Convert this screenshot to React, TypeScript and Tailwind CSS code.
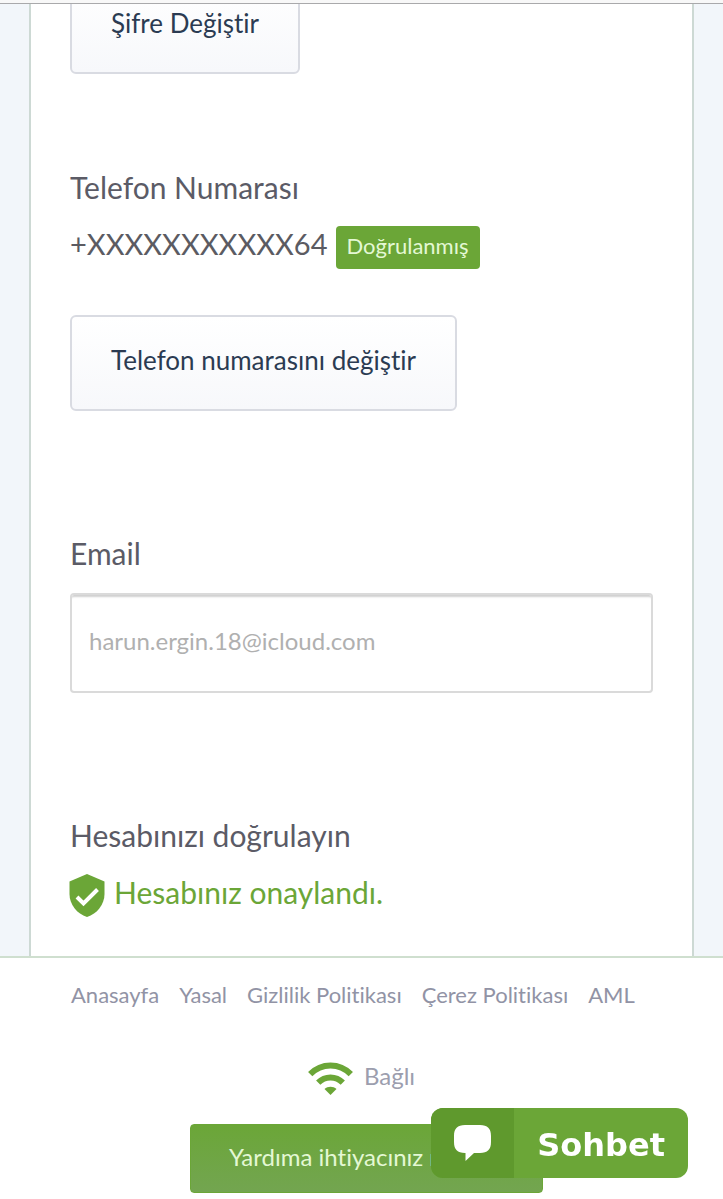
const footerLinks = ['Anasayfa', 'Yasal', 'Gizlilik Politikası', 'Çerez Politikası', 'AML'];

const outlineButton =
  'h-24 px-[39px] pb-1.5 rounded-md border-2 border-[#d9dbe2] bg-linear-to-b from-white to-[#f7f8fb] text-[26px] leading-8 text-[#2b3b52] whitespace-nowrap';

function ShieldIcon() {
  return (
    <svg viewBox="0 0 36 43" className="-ml-px h-[43px] w-9 shrink-0" aria-hidden="true">
      <path d="M18 0 35.5 7.5V20c0 10.500-7.500 20-17.500 23C8 40 .5 30.500.5 20V7.500Z" fill="#6ba637" />
      <path d="m8 23 6.500 6.500L28.500 15.500" fill="none" stroke="#fff" strokeWidth="4" />
    </svg>
  );
}

function WifiIcon() {
  return (
    <svg viewBox="0 0 45 33" className="h-[33px] w-[45px]" aria-hidden="true">
      <g fill="none" stroke="#6ba637" strokeWidth="6">
        <path d="M2.200 12.200C13.500.600 31.500.600 42.800 12.200" />
        <path d="M10.200 20.700C17 13.800 28 13.800 34.800 20.700" />
      </g>
      <path d="M16.500 27c3.300-3 8.700-3 12 0l-6 6Z" fill="#6ba637" />
    </svg>
  );
}

function ChatIcon() {
  return (
    <svg viewBox="0 0 37 36" className="h-9 w-[37px]" aria-hidden="true">
      <path
        d="M11 0h15c7.500 0 11 3.500 11 11v6c0 7.500-3.500 11-11 11h-6l-8.500 8v-8H11C3.500 28 0 24.500 0 17v-6C0 3.500 3.500 0 11 0Z"
        fill="#fff"
      />
    </svg>
  );
}

export default function App() {
  return (
    <div className="min-h-screen bg-white font-['Lato',sans-serif] text-[#5b5b66] [font-variant-ligatures:none]">
      <div className="h-1 border-b border-[#a9a9ab] bg-[#f8f8f8]" />

      <div className="border-b-2 border-[#cfdfcf] bg-[#f2f6fa] px-[29px]">
        <main className="border-x-2 border-[#cdd9d4] bg-white px-[39px] pb-[39px]">
          <div className="flex h-[70px] items-end overflow-hidden">
            <button type="button" className={outlineButton}>
              Şifre Değiştir
            </button>
          </div>

          <section className="pt-[95px]">
            <h2 className="text-[30px] leading-9">Telefon Numarası</h2>
            <div className="mt-[21px] flex items-start gap-2">
              <span className="text-[29px] leading-9 text-[#5b5b62]">+XXXXXXXXXXX64</span>
              <span className="h-[43px] rounded-sm bg-[#6ba637] px-[11px] text-[22px] leading-[40px] text-[#e4f8d4]">
                Doğrulanmış
              </span>
            </div>
            <button type="button" className={`${outlineButton} mt-[46px]`}>
              Telefon numarasını değiştir
            </button>
          </section>

          <section className="pt-[124px]">
            <label htmlFor="email" className="block text-[30px] leading-9">
              Email
            </label>
            <input
              id="email"
              type="email"
              readOnly
              value="harun.ergin.18@icloud.com"
              className="mt-[22px] block h-[100px] w-full rounded-sm border-2 border-[#dadada] px-[17px] pb-1.5 text-[24px] text-[#b0b0b0] shadow-[inset_0_4px_2px_-2px_#d0d0d0] outline-none"
            />
          </section>

          <section className="pt-[124px]">
            <h2 className="text-[30px] leading-9">Hesabınızı doğrulayın</h2>
            <div className="mt-[21px] flex items-start gap-[9px]">
              <ShieldIcon />
              <p className="text-[30px] leading-9 text-[#6ba637]">Hesabınız onaylandı.</p>
            </div>
          </section>
        </main>
      </div>

      <footer className="flex flex-col items-center">
        <nav className="flex w-full flex-wrap gap-x-5 px-[71px] pt-[23px] text-[22px] leading-7 text-[#9193a5]">
          {footerLinks.map((link) => (
            <a key={link} href="#">
              {link}
            </a>
          ))}
        </nav>
        <div className="mt-[53px] flex items-start gap-[11px] text-[24px] leading-7 text-[#9c9eae]">
          <WifiIcon />
          <span>Bağlı</span>
        </div>
        <button
          type="button"
          className="mt-[29px] mb-1.5 ml-2.5 h-[69px] rounded-sm border border-[#6ba637] bg-linear-to-b from-[#6ba637] to-[#73a550] px-[38px] pb-1 text-[24px] text-[#e4f8d4]"
        >
          Yardıma ihtiyacınız mı var?
        </button>
      </footer>

      <button
        type="button"
        className="fixed right-[35px] bottom-[21px] flex h-[70px] overflow-hidden rounded-xl bg-[#6ba637] font-['DejaVu_Sans',sans-serif] text-[32px] font-bold text-white"
      >
        <span className="flex h-full w-[83px] items-center justify-center bg-[#5f992d]">
          <ChatIcon />
        </span>
        <span className="px-[23px] leading-[74px]">Sohbet</span>
      </button>
    </div>
  );
}
